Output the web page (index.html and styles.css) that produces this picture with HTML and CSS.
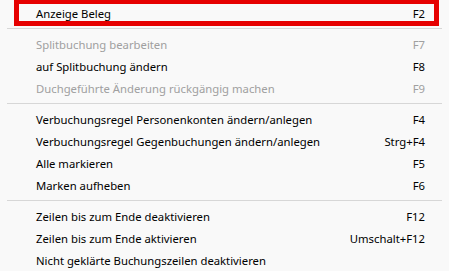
FILE: index.html
```html
<!DOCTYPE html>
<html>
<head>
  <title>Kontextmenü</title>
  <meta name="viewport" content="width=device-width, initial-scale=1.0">
  <link rel="stylesheet" href="styles.css">
</head>
<body>
  <div class="menu">
    <div class="item">
      <span>Anzeige Beleg</span><span class="key">F2</span>
      <div class="highlight"></div>
    </div>
    <div class="sep"></div>
    <div class="item disabled"><span>Splitbuchung bearbeiten</span><span class="key">F7</span></div>
    <div class="item"><span>auf Splitbuchung ändern</span><span class="key">F8</span></div>
    <div class="item disabled"><span>Duchgeführte Änderung rückgängig machen</span><span class="key">F9</span></div>
    <div class="sep"></div>
    <div class="item"><span>Verbuchungsregel Personenkonten ändern/anlegen</span><span class="key">F4</span></div>
    <div class="item"><span>Verbuchungsregel Gegenbuchungen ändern/anlegen</span><span class="key">Strg+F4</span></div>
    <div class="item"><span>Alle markieren</span><span class="key">F5</span></div>
    <div class="item"><span>Marken aufheben</span><span class="key">F6</span></div>
    <div class="sep"></div>
    <div class="item"><span>Zeilen bis zum Ende deaktivieren</span><span class="key">F12</span></div>
    <div class="item"><span>Zeilen bis zum Ende aktivieren</span><span class="key">Umschalt+F12</span></div>
    <div class="item"><span>Nicht geklärte Buchungszeilen deaktivieren</span><span class="key"></span></div>
  </div>
</body>
</html>
```

FILE: styles.css
```css
body {
  margin: 0;
  padding: 0;
  background-color: #f9f9f9;
  font-family: "Noto Sans", "Open Sans", sans-serif;
  font-size: 11.3px;
  color: #000000;
}

.menu {
  width: 449px;
  height: 271px;
  padding-top: 2px;
  box-sizing: border-box;
  overflow: hidden;
}

.item {
  position: relative;
  display: flex;
  justify-content: space-between;
  align-items: center;
  height: 22px;
  padding-left: 36px;
  padding-right: 24px;
}

.disabled {
  color: #a0a0a0;
}

.sep {
  height: 0;
  margin: 4px 7px 4px 7px;
  border-top: 1px solid #d7d7d7;
}

/* red annotation frame around the first entry */
.highlight {
  position: absolute;
  left: 14px;
  top: -3px;
  width: 425px;
  height: 27px;
  border: 5px solid #e60000;
  box-sizing: border-box;
}
```
